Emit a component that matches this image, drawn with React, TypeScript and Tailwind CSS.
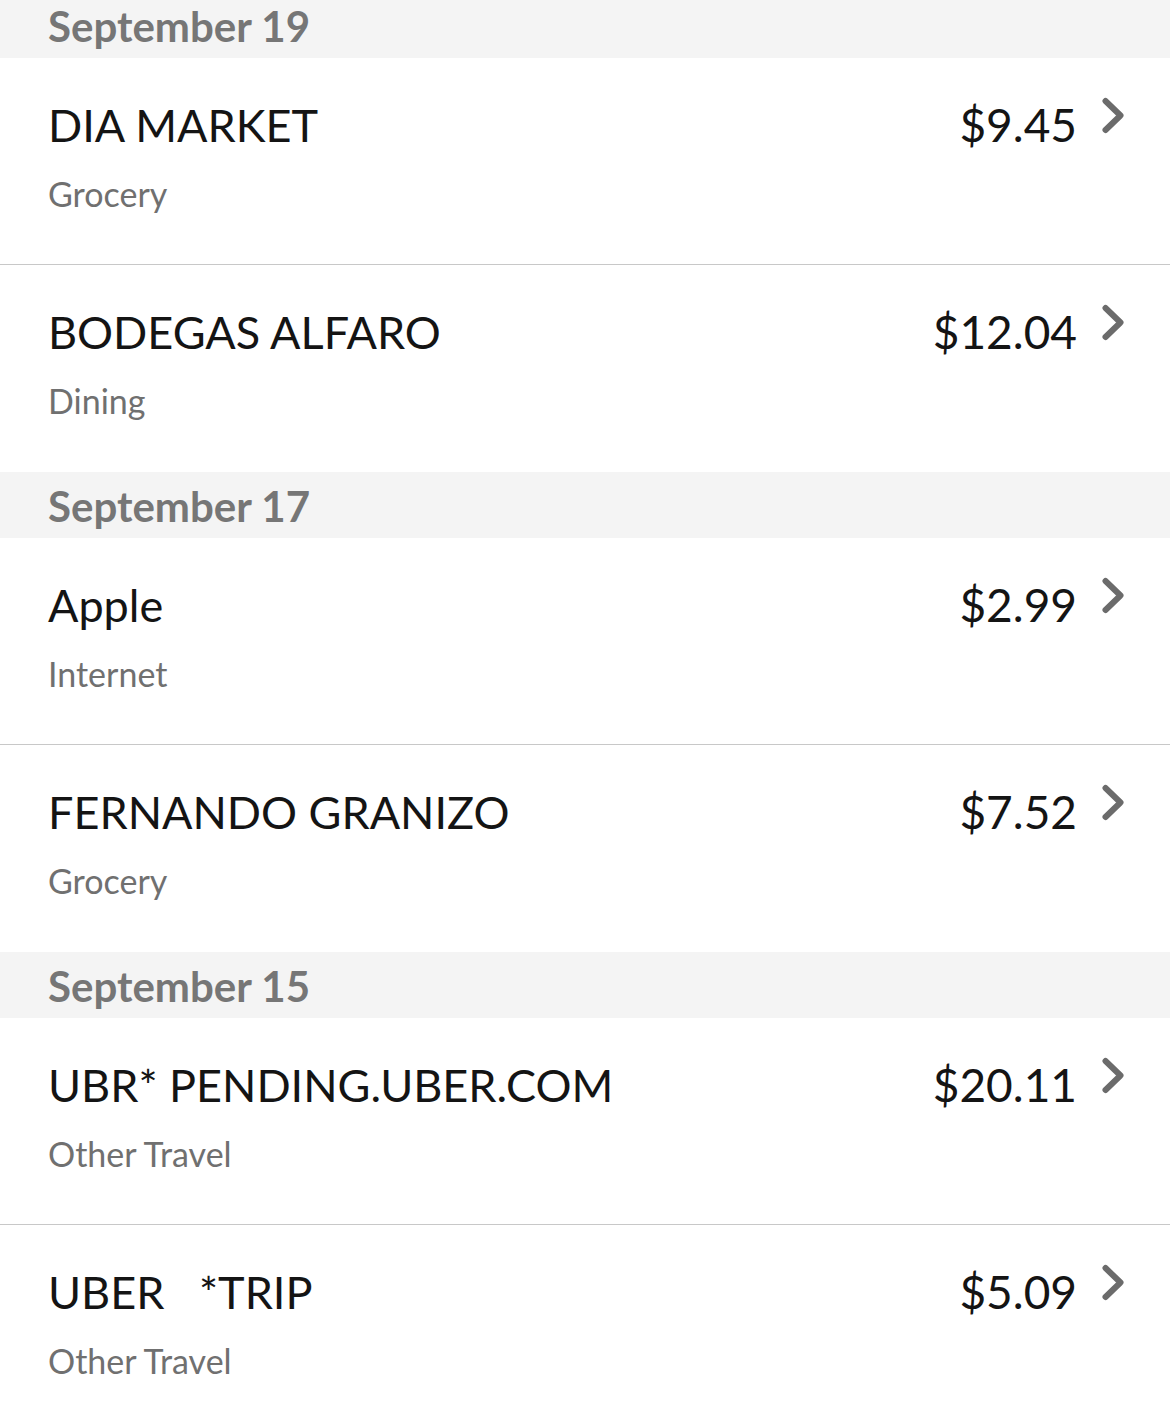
import React from "react";

type Txn = { name: string; category: string; amount: string };
type Group = { date: string; items: Txn[] };

const groups: Group[] = [
  {
    date: "September 19",
    items: [
      { name: "DIA MARKET", category: "Grocery", amount: "$9.45" },
      { name: "BODEGAS ALFARO", category: "Dining", amount: "$12.04" },
    ],
  },
  {
    date: "September 17",
    items: [
      { name: "Apple", category: "Internet", amount: "$2.99" },
      { name: "FERNANDO GRANIZO", category: "Grocery", amount: "$7.52" },
    ],
  },
  {
    date: "September 15",
    items: [
      { name: "UBR* PENDING.UBER.COM", category: "Other Travel", amount: "$20.11" },
      { name: "UBER   *TRIP", category: "Other Travel", amount: "$5.09" },
    ],
  },
];

const Chevron = () => (
  <svg
    width="26"
    height="38"
    viewBox="0 0 26 38"
    fill="none"
    stroke="#6b6b6b"
    strokeWidth="6"
    strokeLinecap="round"
    strokeLinejoin="round"
    className="ml-[22px] -mt-[6px] shrink-0"
  >
    <path d="M6.5 5 L21.5 19.5 L6.5 34" />
  </svg>
);

const Row: React.FC<{ txn: Txn; last: boolean }> = ({ txn, last }) => (
  <div
    className={`flex h-[207px] items-start justify-between pl-[48px] pr-[45px] pt-[44px] ${
      last ? "" : "border-b border-[#c8c8c8]"
    }`}
  >
    <div className="flex flex-col pt-[1px]">
      <span className="whitespace-pre text-[45px] leading-none text-[#141414]">
        {txn.name}
      </span>
      <span className="mt-[29px] text-[34px] leading-none text-[#707070]">
        {txn.category}
      </span>
    </div>
    <div className="flex items-start">
      <span className="text-[46px] leading-none text-[#141414]">
        {txn.amount}
      </span>
      <Chevron />
    </div>
  </div>
);

export default function App() {
  return (
    <div
      className="h-[1426px] w-[1170px] overflow-hidden bg-white"
      style={{ fontFamily: "Lato, 'Noto Sans', sans-serif" }}
    >
      <div className="-mt-[8px]">
        {groups.map((g) => (
          <div key={g.date}>
            <div className="h-[66px] bg-[#f4f4f4] pl-[48px] pt-[13px]">
              <span className="text-[42px] font-bold leading-none text-[#767676]">
                {g.date}
              </span>
            </div>
            {g.items.map((t, i) => (
              <Row key={t.name} txn={t} last={i === g.items.length - 1} />
            ))}
          </div>
        ))}
      </div>
    </div>
  );
}
